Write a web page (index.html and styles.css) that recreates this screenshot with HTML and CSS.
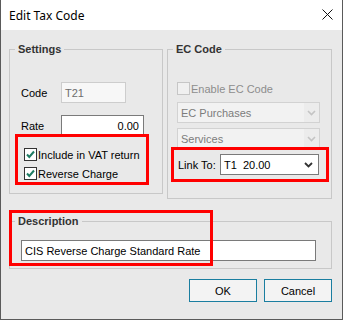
FILE: index.html
```html
<!DOCTYPE html>
<html>
<head>
<meta charset="utf-8">
<link rel="stylesheet" href="styles.css">
</head>
<body>
<div class="window">
  <div class="titlebar">
    <span class="title">Edit Tax Code</span>
    <svg class="close" width="11" height="11" viewBox="0 0 11 11"><path d="M0.5 0.5 L10.5 10.5 M10.5 0.5 L0.5 10.5" stroke="#111" stroke-width="1" fill="none"/></svg>
  </div>
  <div class="content">
    <div class="top-row">
      <fieldset class="group settings">
        <legend>Settings</legend>
        <div class="gb">
          <div class="field-row row-code"><span class="lbl">Code</span><div class="textbox tb-code">T21</div></div>
          <div class="field-row row-rate"><span class="lbl">Rate</span><div class="textbox tb-rate">0.00</div></div>
          <div class="check-row first"><span class="checkbox"><svg width="11" height="11" viewBox="0 0 11 11"><path d="M2 5.5 L4.3 8 L9 2.5" stroke="#1f7d64" stroke-width="2" fill="none"/></svg></span><span>Include in VAT return</span></div>
          <div class="check-row"><span class="checkbox"><svg width="11" height="11" viewBox="0 0 11 11"><path d="M2 5.5 L4.3 8 L9 2.5" stroke="#1f7d64" stroke-width="2" fill="none"/></svg></span><span>Reverse Charge</span></div>
        </div>
      </fieldset>
      <fieldset class="group ec">
        <legend>EC Code</legend>
        <div class="gb">
          <div class="check-row disabled first"><span class="checkbox off"></span><span>Enable EC Code</span></div>
          <div class="combo off c1"><span class="ctext">EC Purchases</span><span class="cbtn"><svg width="9" height="6" viewBox="0 0 9 6"><path d="M1 1 L4.5 4.5 L8 1" stroke="#c4c4c4" stroke-width="1.6" fill="none"/></svg></span></div>
          <div class="combo off c2"><span class="ctext">Services</span><span class="cbtn"><svg width="9" height="6" viewBox="0 0 9 6"><path d="M1 1 L4.5 4.5 L8 1" stroke="#c4c4c4" stroke-width="1.6" fill="none"/></svg></span></div>
          <div class="link-row"><span class="lbl-link">Link To:</span><div class="combo link"><span class="ctext">T1  20.00</span><span class="cbtn"><svg width="9" height="6" viewBox="0 0 9 6"><path d="M1 1 L4.5 4.5 L8 1" stroke="#333" stroke-width="1.8" fill="none"/></svg></span></div></div>
        </div>
      </fieldset>
    </div>
    <fieldset class="group desc">
      <legend>Description</legend>
      <div class="gb">
        <div class="textbox tb-desc">CIS Reverse Charge Standard Rate</div>
      </div>
    </fieldset>
    <div class="buttons">
      <button class="btn">OK</button>
      <button class="btn">Cancel</button>
    </div>
  </div>
  <div class="annot a1"></div>
  <div class="annot a2"></div>
  <div class="annot a3"></div>
</div>
</body>
</html>
```

FILE: styles.css
```css
* { box-sizing: border-box; }
html, body { margin: 0; padding: 0; background: #fff; }
body { font-family: "Liberation Sans", Arial, sans-serif; font-size: 11px; color: #000; }

.window {
  position: relative;
  width: 343px;
  height: 320px;
  border: 1px solid #5a5a5a;
  border-top: none;
  background: #e9e9e9;
}

.titlebar {
  height: 30px;
  background: #fff;
  display: flex;
  align-items: center;
  justify-content: space-between;
  padding: 0 9px 0 8px;
}
.title { font-family: "Noto Sans", sans-serif; font-size: 12px; color: #000; }
.close { display: block; margin-top: -1px; }

.content { padding: 13px 10px 0 8px; }
.top-row { display: flex; gap: 4px; align-items: flex-start; }

fieldset.group {
  margin: 0;
  padding: 0;
  border: 1px solid #c8c8c8;
  min-width: 0;
}
legend {
  margin-left: 5px;
  padding: 0 3px;
  font-weight: bold;
  line-height: 13px;
  color: #333;
}

.settings { width: 154px; }
.settings .gb { padding: 0 0 10px 11px; }
.ec { width: 165px; }
.ec .gb { padding: 0 0 23px 9px; }

.field-row { display: flex; align-items: center; height: 21px; }
.lbl { width: 40px; }
.row-code { margin-top: 26px; }
.row-rate { margin-top: 12px; }

.textbox {
  height: 21px;
  border: 1px solid #7a7a7a;
  background: #fff;
  padding: 0 3px;
  display: flex;
  align-items: center;
}
.tb-code { width: 65px; border-color: #cdcdcd; background: #f7f7f7; color: #6d6d6d; }
.tb-rate { width: 83px; justify-content: flex-end; padding-right: 4px; }

.check-row { display: flex; align-items: center; height: 19px; }
.settings .check-row { padding-left: 3px; }
.settings .check-row.first { margin-top: 9px; }
.checkbox {
  width: 13px;
  height: 13px;
  border: 1px solid #333;
  background: #fff;
  margin-right: 1px;
  display: flex;
}
.checkbox.off { border-color: #c6c6c6; background: #f0f0f0; }
.check-row.disabled { color: #8d8d8d; }
.ec .check-row.first { margin-top: 23px; }

.combo {
  height: 21px;
  border: 1px solid #7a7a7a;
  background: #fff;
  display: flex;
  align-items: center;
  padding-left: 3px;
}
.combo .ctext { flex: 1; white-space: pre; }
.combo .cbtn { width: 15px; height: 100%; display: flex; align-items: center; justify-content: center; }
.combo.off { width: 143px; border-color: #d2d2d2; background: #f2f2f2; color: #7c7c7c; }
.combo.off .cbtn { background: #ececec; }
.c1 { margin-top: 4px; }
.c2 { margin-top: 5px; }
.link-row { display: flex; align-items: center; margin-top: 5px; }
.lbl-link { width: 43px; padding-left: 1px; }
.combo.link { width: 99px; }
.combo.link .cbtn { width: 20px; }

fieldset.desc { margin-top: 16px; }
.desc .gb { padding: 12px 0 7px 11px; }
.tb-desc { width: 295px; }

.buttons { display: flex; justify-content: flex-end; gap: 7px; margin-top: 10px; }
.btn {
  width: 68px;
  height: 23px;
  margin: 0;
  padding: 0;
  border: 1px solid #1a7ea0;
  background: #f3f3f3;
  font: inherit;
  color: #000;
}

.annot { position: absolute; border: 3px solid #f00; }
.a1 { left: 14px; top: 134px; width: 134px; height: 51px; }
.a2 { left: 170px; top: 147px; width: 158px; height: 35px; }
.a3 { left: 8px; top: 210px; width: 204px; height: 56px; }
```
